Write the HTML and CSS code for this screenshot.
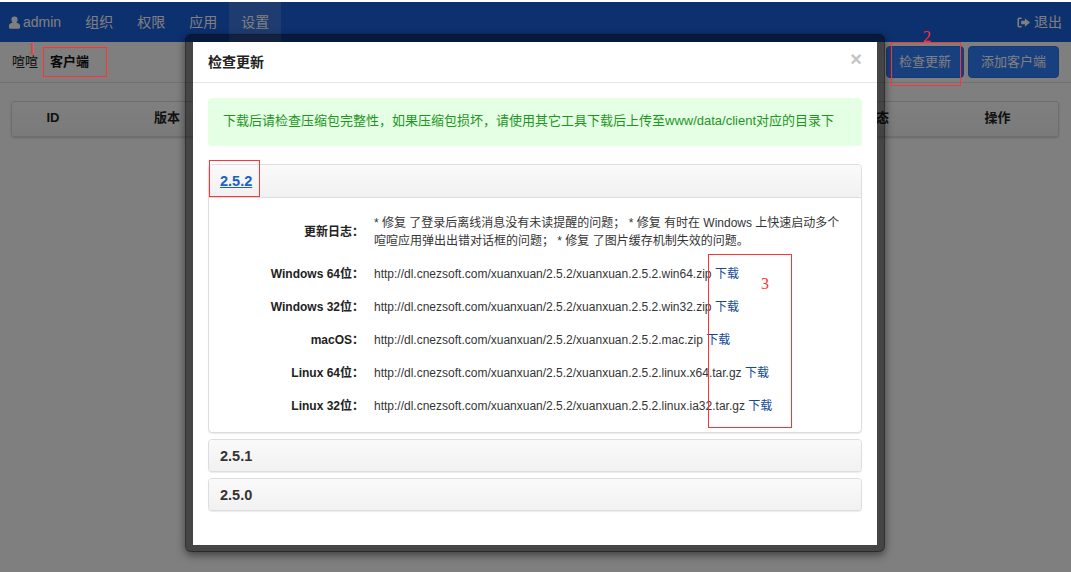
FILE: index.html
```html
<!DOCTYPE html>
<html lang="zh">
<head>
<meta charset="utf-8">
<title>检查更新</title>
<link rel="stylesheet" href="styles.css">
</head>
<body>
<div class="page">
  <nav class="navbar">
    <a class="nav-user">
      <svg class="icon" viewBox="0 0 14 14" width="13" height="13"><path fill="currentColor" d="M7 0.5a3.3 3.3 0 0 1 3.3 3.6c0 1.3-.6 2.6-1.6 3.3 2.4.3 4.3 1.2 4.3 3.4v1.4c0 1-.8 1.6-1.7 1.6H2.7C1.800 13.800 1 13.200 1 12.200v-1.400c0-2.200 1.900-3.100 4.300-3.400-1-.7-1.600-2-1.600-3.300A3.300 3.300 0 0 1 7 .5z"/></svg>
      admin
    </a>
    <a class="nav-item">组织</a>
    <a class="nav-item">权限</a>
    <a class="nav-item">应用</a>
    <a class="nav-item active">设置</a>
    <a class="nav-logout">
      <svg class="icon" viewBox="0 0 14 14" width="13" height="13"><path fill="currentColor" d="M5 1.500H2.500A2 2 0 0 0 .5 3.500v7a2 2 0 0 0 2 2H5v-1.700H2.800a.6.600 0 0 1-.6-.6V3.800a.6.600 0 0 1 .6-.6H5zM8.500 2.500v2.700H4.500v3.600h4v2.700L14 7z"/></svg>
      退出
    </a>
  </nav>
  <header class="subbar">
    <div class="crumbs"><span>喧喧</span><strong class="crumb-active">客户端</strong></div>
    <div class="actions">
      <button class="btn">检查更新</button>
      <button class="btn">添加客户端</button>
    </div>
  </header>
  <main class="content">
    <div class="thead">
      <span>ID</span><span>版本</span><span></span><span>状态</span><span>操作</span>
    </div>
  </main>
</div>

<div class="overlay"></div>

<section class="modal">
  <div class="modal-header">
    <h4>检查更新</h4>
    <span class="close">×</span>
  </div>
  <div class="modal-body">
    <div class="alert">下载后请检查压缩包完整性，如果压缩包损坏，请使用其它工具下载后上传至www/data/client对应的目录下</div>

    <article class="panel">
      <div class="panel-heading panel-heading-open"><a class="version current">2.5.2</a></div>
      <div class="panel-body">
        <div class="row row-log">
          <b>更新日志：</b>
          <p>* 修复 了登录后离线消息没有未读提醒的问题； * 修复 有时在 Windows 上快速启动多个喧喧应用弹出出错对话框的问题； * 修复 了图片缓存机制失效的问题。</p>
        </div>
        <div class="row"><b>Windows 64位：</b><p>http://dl.cnezsoft.com/xuanxuan/2.5.2/xuanxuan.2.5.2.win64.zip <a>下载</a></p></div>
        <div class="row"><b>Windows 32位：</b><p>http://dl.cnezsoft.com/xuanxuan/2.5.2/xuanxuan.2.5.2.win32.zip <a>下载</a></p></div>
        <div class="row"><b>macOS：</b><p>http://dl.cnezsoft.com/xuanxuan/2.5.2/xuanxuan.2.5.2.mac.zip <a>下载</a></p></div>
        <div class="row"><b>Linux 64位：</b><p>http://dl.cnezsoft.com/xuanxuan/2.5.2/xuanxuan.2.5.2.linux.x64.tar.gz <a>下载</a></p></div>
        <div class="row"><b>Linux 32位：</b><p>http://dl.cnezsoft.com/xuanxuan/2.5.2/xuanxuan.2.5.2.linux.ia32.tar.gz <a>下载</a></p></div>
      </div>
    </article>

    <article class="panel">
      <div class="panel-heading"><a class="version">2.5.1</a></div>
    </article>
    <article class="panel">
      <div class="panel-heading"><a class="version">2.5.0</a></div>
    </article>
  </div>
</section>

<div class="mark mark-1"></div>
<div class="mark mark-2"></div>
<div class="mark mark-3"></div>
<div class="mark mark-4"></div>
<span class="mark-num num-1">1</span>
<span class="mark-num num-2">2</span>
<span class="mark-num num-3">3</span>
</body>
</html>
```

FILE: styles.css
```css
* { box-sizing: border-box; }

html, body {
  margin: 0;
  height: 572px;
  overflow: hidden;
}

body {
  position: relative;
  background: #fff;
  color: #353535;
  font: 13px/18px "Liberation Sans", "Noto Sans CJK SC", sans-serif;
}

.page {
  padding-top: 2px;
  height: 572px;
  background: #fff;
}

.navbar {
  display: flex;
  align-items: stretch;
  height: 40px;
  background: #1a60de;
  color: #fff;
  font-size: 14px;
  line-height: 40px;
}

.nav-user {
  display: flex;
  align-items: center;
  gap: 2px;
  padding: 0 12px 0 8px;
}

.nav-item { padding: 0 12px; }
.nav-item.active { background: rgba(255, 255, 255, .16); }

.nav-logout {
  display: flex;
  align-items: center;
  gap: 4px;
  margin-left: auto;
  padding-right: 9px;
}

.subbar {
  display: flex;
  align-items: center;
  justify-content: space-between;
  height: 41px;
  padding: 0 12px;
  border-bottom: 1px solid #e4e4e4;
}

.crumbs { display: flex; gap: 12px; color: #222; }
.crumb-active { color: #111; }

.actions { display: flex; gap: 4px; }

.btn {
  width: 78px;
  height: 32px;
  padding: 0;
  border: 1px solid #2a74ea;
  border-radius: 4px;
  background: #3280fc;
  color: #fff;
  font: 13px/18px "Liberation Sans", "Noto Sans CJK SC", sans-serif;
}
.btn + .btn { width: 91px; }

.content { padding: 18px 12px 0 11px; }

.thead {
  display: grid;
  grid-template-columns: 82px 146px 1fr 122px 121px;
  align-items: center;
  height: 36px;
  padding-bottom: 2px;
  border: 1px solid #ddd;
  border-radius: 3px;
  background: linear-gradient(#fff, #f5f5f5);
  box-shadow: 0 1px 2px rgba(0, 0, 0, .18);
  color: #222;
  font-weight: 700;
  text-align: center;
}

.overlay {
  position: absolute;
  inset: 2px 0 0;
  background: rgba(0, 0, 0, .5);
}

.modal {
  position: absolute;
  left: 185px;
  top: 34px;
  width: 700px;
  height: 518px;
  border: solid rgba(0, 0, 0, .45);
  border-width: 8px 8px 7px;
  border-radius: 6px;
  background: #fff;
  background-clip: padding-box;
  box-shadow: 0 3px 9px rgba(0, 0, 0, .5);
}

.modal-header {
  display: flex;
  align-items: center;
  justify-content: space-between;
  height: 41px;
  padding: 0 15px;
  border-bottom: 1px solid #e5e5e5;
}

.modal-header h4 {
  margin: 0;
  font-size: 14px;
  line-height: 20px;
  font-weight: 700;
  color: #222;
}

.close {
  margin: -6px 0 0;
  color: #c4c4c4;
  font-size: 20px;
  font-weight: 700;
}

.modal-body { padding: 15px; }

.alert {
  height: 48px;
  margin-bottom: 18px;
  padding: 14px 15px;
  border-radius: 4px;
  background: #e5ffe5;
  color: #1e961e;
  white-space: nowrap;
}

.panel {
  margin-bottom: 6px;
  border: 1px solid #ddd;
  border-radius: 4px;
  background: #fff;
  box-shadow: 0 1px 1px rgba(0, 0, 0, .08);
}

.panel-heading {
  display: flex;
  align-items: center;
  height: 31px;
  padding: 0 11px;
  background: linear-gradient(#fafafa, #f1f1f1);
  border-radius: 3px;
}

.panel-heading-open { height: 32px; }

.panel-body {
  height: 235px;
  padding: 16px 0 0;
  border-top: 1px solid #ddd;
}

.version {
  color: #333;
  font-size: 14.5px;
  font-weight: 700;
}
.version.current { color: #1a5fc8; text-decoration: underline; }

.row {
  display: grid;
  grid-template-columns: 149px 470px;
  column-gap: 16px;
  align-items: center;
  height: 33px;
  font-size: 12px;
  line-height: 18px;
  color: #353535;
}

.row-log { height: 36px; margin-bottom: 7px; }

.row b { text-align: right; color: #222; white-space: nowrap; margin-right: -6px; }
.row p { margin: 0; }
.row a { color: #134a96; }

.mark {
  position: absolute;
  border: 1px solid #f33;
}
.mark-1 { left: 43px; top: 47px; width: 64px; height: 30px; }
.mark-2 { left: 891px; top: 42px; width: 70px; height: 44px; }
.mark-3 { left: 708px; top: 254px; width: 84px; height: 174px; }
.mark-4 { left: 209px; top: 160px; width: 51px; height: 37px; }

.mark-num {
  position: absolute;
  color: #f33;
  font: 16px/16px "Liberation Serif", serif;
}
.num-1 { left: 28px; top: 41px; }
.num-2 { left: 923px; top: 29px; }
.num-3 { left: 761px; top: 276px; }
```
